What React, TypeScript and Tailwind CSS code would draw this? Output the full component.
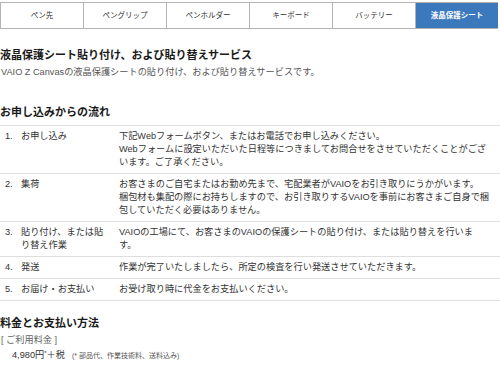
import React from "react";

const tabs = ["ペン先", "ペングリップ", "ペンホルダー", "キーボード", "バッテリー", "液晶保護シート"];

const rows: { n: string; label: React.ReactNode; lines: string[] }[] = [
  {
    n: "1.",
    label: "お申し込み",
    lines: [
      "下記Webフォームボタン、またはお電話でお申し込みください。",
      "Webフォームに設定いただいた日程等につきましてお問合せをさせていただくことがござ",
      "います。ご了承ください。",
    ],
  },
  {
    n: "2.",
    label: "集荷",
    lines: [
      "お客さまのご自宅またはお勤め先まで、宅配業者がVAIOをお引き取りにうかがいます。",
      "梱包材も集配の際にお持ちしますので、お引き取りするVAIOを事前にお客さまご自身で梱",
      "包していただく必要はありません。",
    ],
  },
  {
    n: "3.",
    label: (
      <>
        貼り付け、または貼
        <br />
        り替え作業
      </>
    ),
    lines: ["VAIOの工場にて、お客さまのVAIOの保護シートの貼り付け、または貼り替えを行いま", "す。"],
  },
  {
    n: "4.",
    label: "発送",
    lines: ["作業が完了いたしましたら、所定の検査を行い発送させていただきます。"],
  },
  {
    n: "5.",
    label: "お届け・お支払い",
    lines: ["お受け取り時に代金をお支払いください。"],
  },
];

export default function App() {
  return (
    <div className="w-[500px] h-[366px] overflow-hidden bg-white text-[#333] font-['Liberation_Sans','Noto_Sans_CJK_JP',sans-serif]">
      <div className="mt-[2px] flex w-[498px] h-[27px] border-y border-l border-[#b3b3b3]">
        {tabs.map((t, i) => {
          const active = i === tabs.length - 1;
          return (
            <div
              key={t}
              className={
                active
                  ? "flex-1 flex items-center justify-center bg-[#3b79bc] text-white font-bold text-[7.5px]"
                  : "flex-1 flex items-center justify-center border-r border-[#b3b3b3] text-[#333] text-[7.5px]"
              }
            >
              {t}
            </div>
          );
        })}
      </div>

      <h1 className="mt-[18px] text-[11px] leading-[16px] font-bold text-[#1a1a1a] whitespace-nowrap">
        液晶保護シート貼り付け、および貼り替えサービス
      </h1>
      <p className="mt-[3px] pl-[1px] text-[9.2px] leading-[13px] text-[#555] whitespace-nowrap">
        VAIO Z Canvasの液晶保護シートの貼り付け、および貼り替えサービスです。
      </p>

      <h2 className="mt-[25px] text-[11px] leading-[16px] font-bold text-[#1a1a1a] whitespace-nowrap">
        お申し込みからの流れ
      </h2>

      <div className="mt-[5px] border-b border-[#dedede]">
        {rows.map((r) => (
          <div
            key={r.n}
            className="grid grid-cols-[21px_98px_1fr] border-t border-[#dedede] py-[4px] text-[9.2px] leading-[13px] text-[#333]"
          >
            <div className="pl-[5px]">{r.n}</div>
            <div className="whitespace-nowrap">{r.label}</div>
            <div className="whitespace-nowrap">
              {r.lines.map((l, i) => (
                <div key={i}>{l}</div>
              ))}
            </div>
          </div>
        ))}
      </div>

      <h2 className="mt-[14px] text-[11px] leading-[16px] font-bold text-[#1a1a1a] whitespace-nowrap">
        料金とお支払い方法
      </h2>
      <p className="mt-[3px] pl-[1px] text-[9.2px] leading-[13px] text-[#666] whitespace-nowrap">
        [ ご利用料金 ]
      </p>
      <p className="mt-[2px] pl-[12px] text-[9.2px] leading-[13px] text-[#333] whitespace-nowrap flex items-baseline">
        <span>4,980円</span>
        <span className="text-[6px] relative -top-[3px]">*</span>
        <span>＋税</span>
        <span className="ml-[7px] text-[7px] text-[#555]">(* 部品代、作業技術料、送料込み)</span>
      </p>
    </div>
  );
}
